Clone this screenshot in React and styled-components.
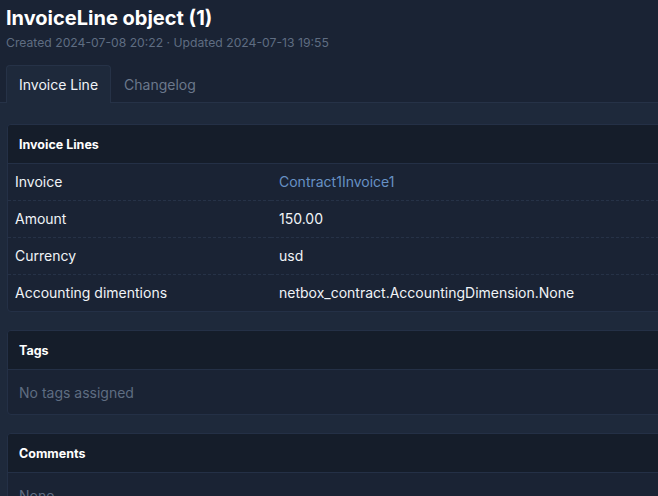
import React from "react";
import styled, { createGlobalStyle } from "styled-components";

const Global = createGlobalStyle`
  html, body { margin: 0; padding: 0; overflow: hidden; }
  body {
    background: #1e293b;
    font-family: Inter, "Noto Sans", sans-serif;
    color: #f0f3f7;
    -webkit-font-smoothing: antialiased;
  }
`;

const Page = styled.div`
  width: 860px;
  min-height: 496px;
  background: #1e293b;
`;

const Header = styled.header`
  background: #1a2334;
  padding: 6px 0 0 6px;
`;

const Title = styled.h1`
  margin: 0;
  font-size: 20px;
  line-height: 24px;
  font-weight: 700;
  color: #ffffff;
`;

const Sub = styled.div`
  margin-top: 4px;
  font-size: 12.2px;
  line-height: 17px;
  color: #5f6d82;
`;

const TabBar = styled.nav`
  display: flex;
  margin: 14px 0 0 -6px;
  padding-left: 6px;
  border-bottom: 1px solid #263247;
`;

const Tab = styled.div`
  padding: 0 12px;
  height: 38px;
  box-sizing: border-box;
  display: flex;
  align-items: center;
  font-size: 14px;
  margin-bottom: -1px;
  border: 1px solid ${(p) => (p.$active ? "#263247" : "transparent")};
  border-bottom: none;
  border-radius: 4px 4px 0 0;
  background: ${(p) => (p.$active ? "#1e293b" : "transparent")};
  color: ${(p) => (p.$active ? "#f0f3f7" : "#6b788c")};
`;

const Content = styled.main`
  padding: 21px 0 0 7px;
  display: flex;
  flex-direction: column;
  gap: 18px;
`;

const Card = styled.section`
  border: 1px solid #243046;
  border-radius: 4px;
  background: #1a2334;
  overflow: hidden;
`;

const CardHeader = styled.div`
  background: #151d2a;
  height: 38px;
  display: flex;
  align-items: center;
  padding-left: 11px;
  font-size: 12.5px;
  font-weight: 700;
  color: #ffffff;
  border-bottom: 1px solid #243046;
`;

const Table = styled.table`
  width: 100%;
  border-collapse: collapse;
  font-size: 14px;
`;

const Row = styled.tr`
  & + & td, & + & th { border-top: 1px dashed #263247; }
`;

const Th = styled.th`
  text-align: left;
  font-weight: 400;
  width: 248px;
  padding: 8px 8px 8px 7px;
  line-height: 20px;
  color: #f0f3f7;
`;

const Td = styled.td`
  padding: 8px;
  line-height: 20px;
  color: #f0f3f7;
`;

const Link = styled.a`
  color: #6791c4;
  text-decoration: none;
`;

const Muted = styled.div`
  padding: 13px 11px 11px;
  font-size: 14px;
  line-height: 20px;
  color: #5f6d82;
`;

const rows = [
  ["Invoice", <Link href="#">Contract1Invoice1</Link>],
  ["Amount", "150.00"],
  ["Currency", "usd"],
  ["Accounting dimentions", "netbox_contract.AccountingDimension.None"],
];

export default function App() {
  return (
    <Page>
      <Global />
      <Header>
        <Title>InvoiceLine object (1)</Title>
        <Sub>Created 2024-07-08 20:22 · Updated 2024-07-13 19:55</Sub>
        <TabBar>
          <Tab $active>Invoice Line</Tab>
          <Tab>Changelog</Tab>
        </TabBar>
      </Header>
      <Content>
        <Card>
          <CardHeader>Invoice Lines</CardHeader>
          <Table>
            <tbody>
              {rows.map(([k, v]) => (
                <Row key={k}>
                  <Th>{k}</Th>
                  <Td>{v}</Td>
                </Row>
              ))}
            </tbody>
          </Table>
        </Card>
        <Card>
          <CardHeader>Tags</CardHeader>
          <Muted>No tags assigned</Muted>
        </Card>
        <Card>
          <CardHeader>Comments</CardHeader>
          <Muted>None</Muted>
        </Card>
      </Content>
    </Page>
  );
}
